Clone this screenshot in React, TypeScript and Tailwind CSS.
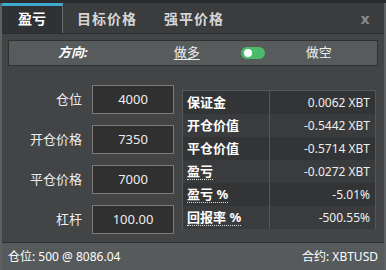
import React from "react";

const font = { fontFamily: '"Noto Sans", "Noto Sans CJK SC", sans-serif' };

const inputs = [
  { label: "仓位", value: "4000" },
  { label: "开仓价格", value: "7350" },
  { label: "平仓价格", value: "7000" },
  { label: "杠杆", value: "100.00" },
];

const rows = [
  { label: "保证金", value: "0.0062 XBT", dotted: false },
  { label: "开仓价值", value: "-0.5442 XBT", dotted: false },
  { label: "平仓价值", value: "-0.5714 XBT", dotted: false },
  { label: "盈亏", value: "-0.0272 XBT", dotted: true },
  { label: "盈亏 %", value: "-5.01%", dotted: true },
  { label: "回报率 %", value: "-500.55%", dotted: true },
];

export default function App() {
  return (
    <div
      className="h-[270px] w-[386px] overflow-hidden bg-[#2a2b2c] pt-[3px] text-[12px] text-[#eeeeee]"
      style={font}
    >
      <div className="flex h-[267px] flex-col border-x-2 border-[#5e6061] bg-[#434446]">
        {/* tabs */}
        <div className="flex h-[31px] shrink-0 items-stretch border-b border-[#2b2c2d] bg-[#3b3c3e]">
          <div className="flex w-[61px] items-center justify-center border-t-[3px] border-r border-t-[#3fa9cf] border-r-[#6a6c6e] bg-[#303132] pb-[2px] text-[14px] font-bold text-white">
            盈亏
          </div>
          <div className="flex w-[88px] items-center justify-center text-[14px] font-bold tracking-[1px] text-[#d6d6d6]">
            目标价格
          </div>
          <div className="flex w-[86px] items-center justify-center text-[14px] font-bold tracking-[1px] text-[#d6d6d6]">
            强平价格
          </div>
          <div className="flex-1" />
          <div className="flex w-[38px] items-center justify-center text-[15px] font-bold text-[#8c8c8c]">
            x
          </div>
        </div>

        {/* direction */}
        <div className="mx-[6px] mt-[6px] flex h-[26px] items-center border border-[#2f3030] bg-[#575b5b] text-[13px]">
          <span className="ml-[49px] font-bold italic text-white">方向:</span>
          <span className="ml-[86px] underline underline-offset-2">做多</span>
          <span className="ml-[41px] flex h-[12px] w-[24px] items-center rounded-full bg-[#4cba6b] pl-[3px]">
            <span className="h-[8px] w-[8px] rounded-full bg-white" />
          </span>
          <span className="ml-[41px]">做空</span>
        </div>

        {/* body */}
        <div className="flex flex-1 pt-[19px]">
          <div className="flex w-[180px] flex-col gap-[11px]">
            {inputs.map((i) => (
              <div key={i.label} className="flex items-center">
                <span className="w-[80px] text-right text-[13px]">{i.label}</span>
                <div className="ml-[10px] flex h-[29px] w-[82px] items-center justify-center border border-[#7a7a7a] bg-[#303030] text-[13px]">
                  {i.value}
                </div>
              </div>
            ))}
          </div>
          <div className="mt-[5px] h-[139px] w-[194px] border border-[#555657] bg-[#3a3b3c]">
            {rows.map((r, idx) => (
              <div
                key={r.label}
                className={
                  "flex h-[23px] items-center " +
                  (idx % 2 === 0 ? "bg-[#333435]" : "bg-[#3a3b3c]")
                }
              >
                <div className="flex h-full w-[87px] items-center border-r border-[#555657] pl-[4px]">
                  <span
                    className={
                      "text-[13px] font-bold text-white " +
                      (r.dotted ? "border-b border-dotted border-[#dddddd] leading-[15px]" : "")
                    }
                  >
                    {r.label}
                  </span>
                </div>
                <div className="flex-1 pr-[5px] text-right text-[12px]">{r.value}</div>
              </div>
            ))}
          </div>
        </div>

        {/* footer */}
        <div className="flex h-[28px] shrink-0 items-center justify-between border-t border-[#2e2f30] bg-[#565a5a] px-[6px] text-[12px] text-white">
          <span>仓位: 500 @ 8086.04</span>
          <span>合约: XBTUSD</span>
        </div>
      </div>
    </div>
  );
}
